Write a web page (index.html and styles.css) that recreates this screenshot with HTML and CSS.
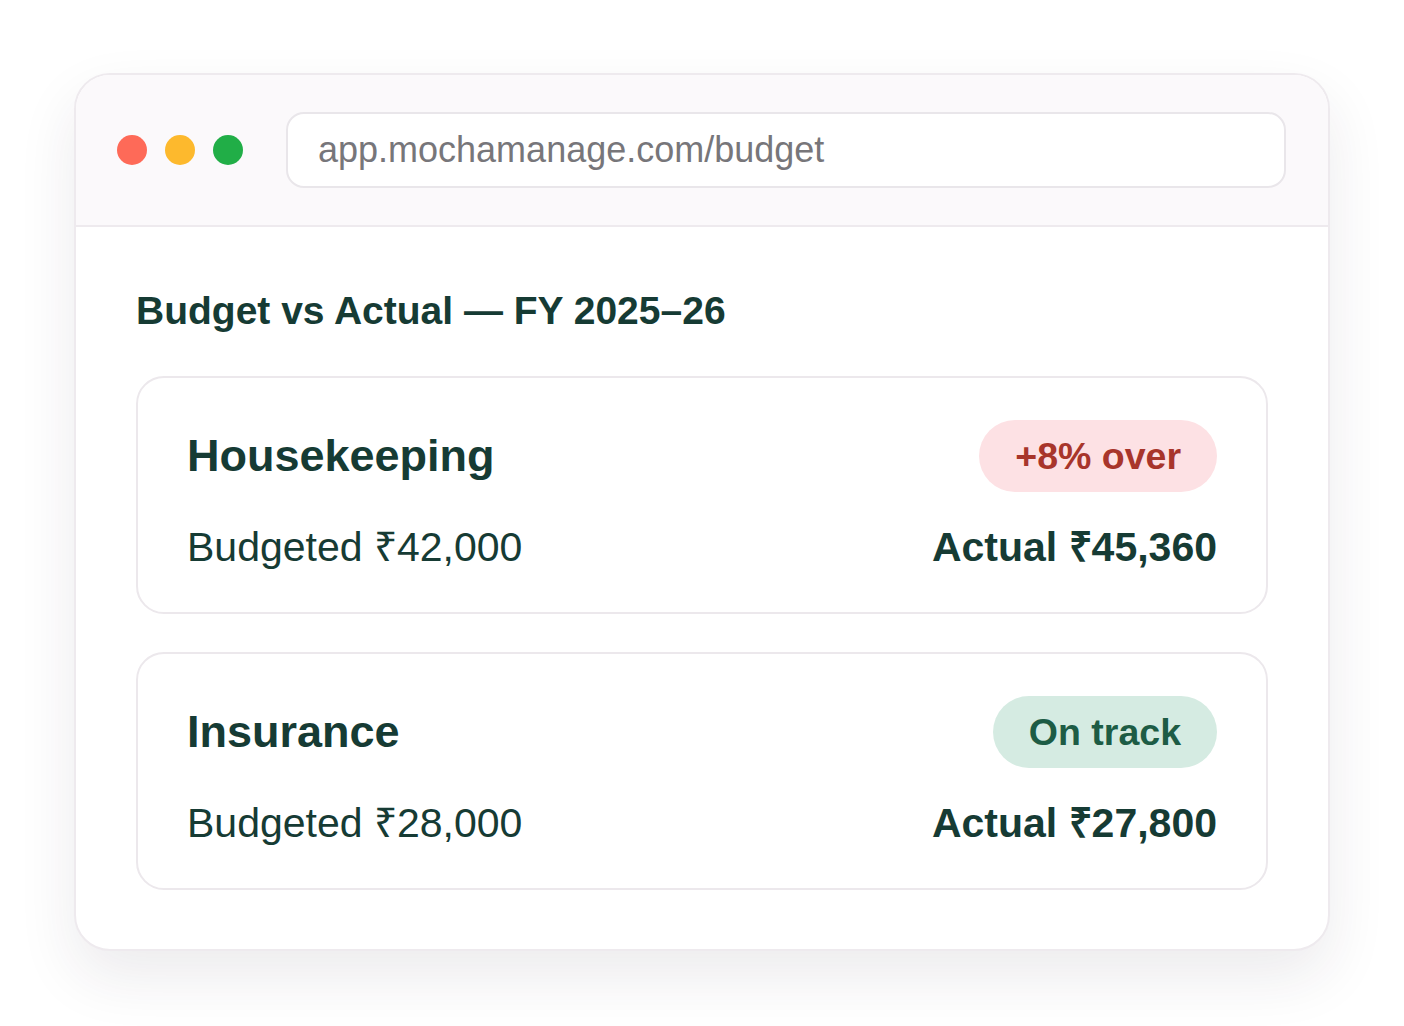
FILE: index.html
```html
<!DOCTYPE html>
<html lang="en">

<head>
    <meta charset="UTF-8">
    <meta name="viewport" content="width=device-width, initial-scale=1.0">
    <title>Budget vs Actual</title>
    <link rel="stylesheet" href="styles.css">
</head>

<body>

    <div class="window">
        <div class="bar">
            <div class="dots">
                <span class="dot red"></span>
                <span class="dot yellow"></span>
                <span class="dot green"></span>
            </div>
            <div class="url">app.mochamanage.com/budget</div>
        </div>

        <div class="content">
            <h1 class="title">Budget vs Actual — FY 2025–26</h1>

            <div class="card">
                <div class="row">
                    <span class="name">Housekeeping</span>
                    <span class="badge over">+8% over</span>
                </div>
                <div class="row amounts">
                    <span class="budgeted">Budgeted ₹42,000</span>
                    <span class="actual">Actual ₹45,360</span>
                </div>
            </div>

            <div class="card">
                <div class="row">
                    <span class="name">Insurance</span>
                    <span class="badge ok">On track</span>
                </div>
                <div class="row amounts">
                    <span class="budgeted">Budgeted ₹28,000</span>
                    <span class="actual">Actual ₹27,800</span>
                </div>
            </div>
        </div>
    </div>

</body>

</html>
```

FILE: styles.css
```css
html,
body {
    height: 100%;
}

body {
    margin: 0;
    padding-top: 73px;
    box-sizing: border-box;
    background-color: #ffffff;
    font-family: "Liberation Sans", Arial, sans-serif;
    color: #163b34;
}

.window {
    width: 1256px;
    box-sizing: border-box;
    margin-left: 74px;
    border: 2px solid #eeeaee;
    border-radius: 36px;
    background-color: #ffffff;
    box-shadow: 0 26px 60px rgba(40, 30, 50, 0.09);
    overflow: hidden;
}

.bar {
    display: flex;
    align-items: center;
    gap: 43px;
    padding: 37px 42px 37px 41px;
    background-color: #fbf9fb;
    border-bottom: 2px solid #eeeaee;
}

.dots {
    display: flex;
    gap: 18px;
}

.dot {
    width: 30px;
    height: 30px;
    border-radius: 50%;
}

.red {
    background-color: #fe6a58;
}

.yellow {
    background-color: #fdb92d;
}

.green {
    background-color: #21ae47;
}

.url {
    flex: 1;
    height: 72px;
    line-height: 72px;
    padding: 0 30px;
    border: 2px solid #e9e6ea;
    border-radius: 18px;
    background-color: #ffffff;
    font-size: 36px;
    color: #77767a;
}

.content {
    padding: 61px 60px 59px 60px;
}

.title {
    margin: 0 0 42px 0;
    font-size: 39px;
    line-height: 46px;
    font-weight: bold;
}

.card {
    border: 2px solid #ece8ec;
    border-radius: 28px;
    padding: 42px 49px 41px 49px;
}

.card + .card {
    margin-top: 38px;
}

.row {
    display: flex;
    justify-content: space-between;
    align-items: center;
}

.amounts {
    margin-top: 31px;
    font-size: 41px;
    line-height: 48px;
}

.name {
    font-size: 45px;
    font-weight: bold;
}

.actual {
    font-weight: bold;
}

.badge {
    height: 72px;
    line-height: 72px;
    padding: 0 36px;
    border-radius: 36px;
    font-size: 37.5px;
    font-weight: bold;
}

.over {
    background-color: #fde1e4;
    color: #a8352b;
}

.ok {
    background-color: #d5ebe2;
    color: #1d5c45;
}
```
